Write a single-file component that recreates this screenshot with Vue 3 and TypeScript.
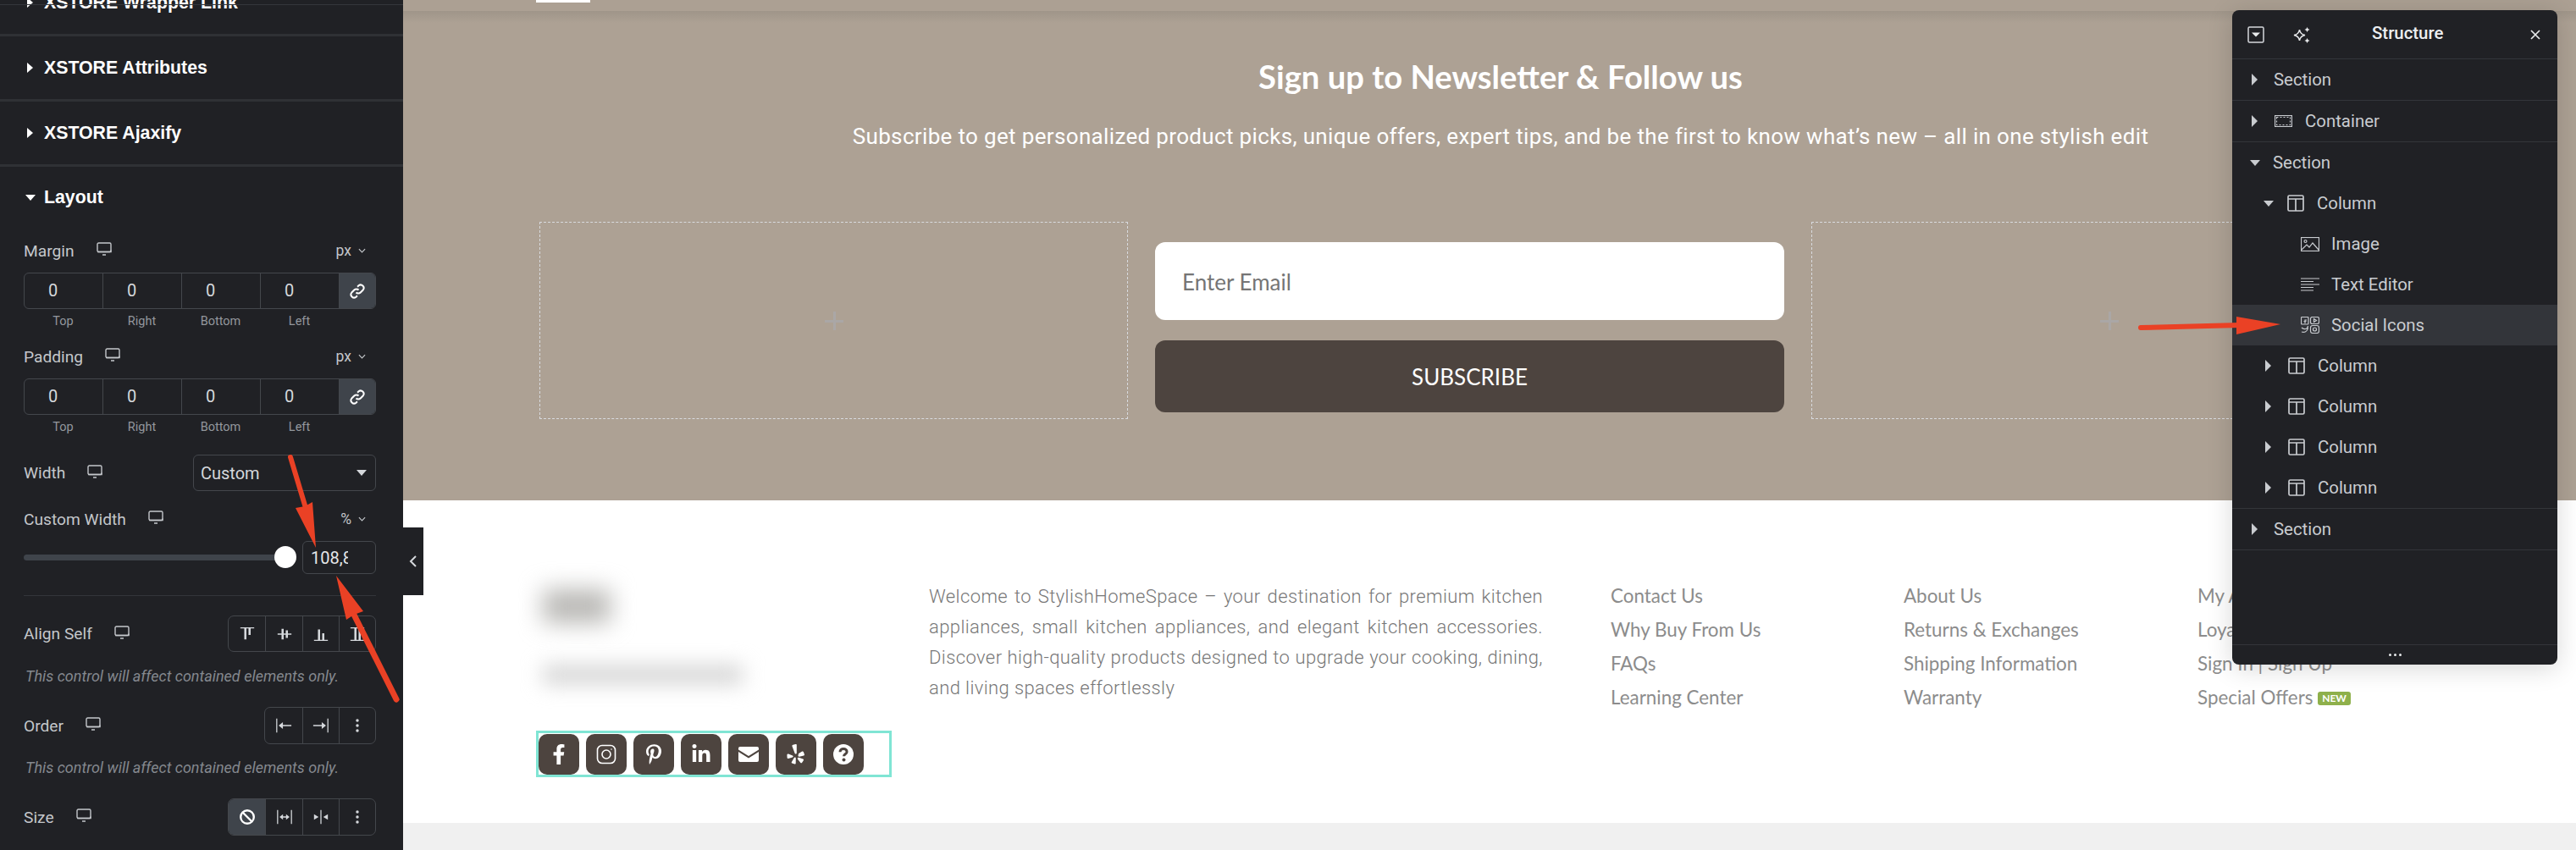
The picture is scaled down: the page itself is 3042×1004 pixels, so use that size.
<script setup lang="ts">
const boxLabels = ['Top', 'Right', 'Bottom', 'Left']
const boxes = ['Margin', 'Padding']
const col1 = ['Contact Us', 'Why Buy From Us', 'FAQs', 'Learning Center']
const col2 = ['About Us', 'Returns & Exchanges', 'Shipping Information', 'Warranty']
const col3 = ['My Account', 'Loyalty Program', 'Sign In | Sign Up']
const columns = [1, 2, 3, 4]
</script>

<template>
  <div class="root">
    <aside class="side">
      <div class="side-line"></div>
      <div class="acc first"><span class="caret-r"></span><span>XSTORE Wrapper Link</span></div>
      <div class="acc"><span class="caret-r"></span><span>XSTORE Attributes</span></div>
      <div class="acc"><span class="caret-r"></span><span>XSTORE Ajaxify</span></div>
      <div class="layout-head"><span class="caret-d"></span><span>Layout</span></div>

      <div class="controls">
        <template v-for="(b, i) in boxes" :key="b">
          <div class="ctl-head" :class="{ 'mt-pad': i === 1 }">
            <span class="lbl">{{ b }}</span>
            <svg class="mon" viewBox="0 0 18 16"><rect x="1" y="1" width="16" height="10.5" rx="1.5" /><path d="M1 11.5h16v-2M7 15h4" /></svg>
            <span class="unit">px<svg class="chev" viewBox="0 0 10 6"><path d="M1 1l4 4 4-4" /></svg></span>
          </div>
          <div class="dims">
            <div v-for="l in boxLabels" :key="l" class="dim">0</div>
            <div class="dim-link">
              <svg viewBox="0 0 20 20"><path d="M8.5 11.5a3.6 3.6 0 0 0 5.2 0l3-3a3.7 3.7 0 0 0-5.2-5.2l-1.4 1.4M11.5 8.5a3.6 3.6 0 0 0-5.2 0l-3 3a3.7 3.7 0 0 0 5.2 5.2l1.4-1.4" /></svg>
            </div>
          </div>
          <div class="dim-labels">
            <span v-for="l in boxLabels" :key="l">{{ l }}</span>
            <i></i>
          </div>
        </template>

        <div class="row-width">
          <span class="lbl">Width</span>
          <svg class="mon" viewBox="0 0 18 16"><rect x="1" y="1" width="16" height="10.5" rx="1.5" /><path d="M1 11.5h16v-2M7 15h4" /></svg>
          <div class="select"><span>Custom</span><span class="sel-caret"></span></div>
        </div>

        <div class="ctl-head mt-cw">
          <span class="lbl">Custom Width</span>
          <svg class="mon" viewBox="0 0 18 16"><rect x="1" y="1" width="16" height="10.5" rx="1.5" /><path d="M1 11.5h16v-2M7 15h4" /></svg>
          <span class="unit">%<svg class="chev" viewBox="0 0 10 6"><path d="M1 1l4 4 4-4" /></svg></span>
        </div>
        <div class="slider-row">
          <div class="track"><div class="thumb"></div></div>
          <div class="num"><span>108,8</span></div>
        </div>
        <div class="rule"></div>

        <div class="choice-row first-choice">
          <span class="lbl">Align Self</span>
          <svg class="mon" viewBox="0 0 18 16"><rect x="1" y="1" width="16" height="10.5" rx="1.5" /><path d="M1 11.5h16v-2M7 15h4" /></svg>
          <div class="group">
            <div class="cell"><svg viewBox="0 0 22 20"><path d="M2 2h18" /><path class="th" d="M8.5 2v15M14 2v9" /></svg></div>
            <div class="cell"><svg viewBox="0 0 22 20"><path d="M2 10h18" /><path class="th" d="M8.5 3v14M14 5v10" /></svg></div>
            <div class="cell"><svg viewBox="0 0 22 20"><path d="M2 18h18" /><path class="th" d="M8.5 4v14M14 9v9" /></svg></div>
            <div class="cell"><svg viewBox="0 0 22 20"><path d="M2 2h18M2 18h18" /><path class="th" d="M8.5 2v16M14 2v16" /></svg></div>
          </div>
        </div>
        <p class="note n1">This control will affect contained elements only.</p>

        <div class="choice-row second-choice">
          <span class="lbl">Order</span>
          <svg class="mon" viewBox="0 0 18 16"><rect x="1" y="1" width="16" height="10.5" rx="1.5" /><path d="M1 11.5h16v-2M7 15h4" /></svg>
          <div class="group">
            <div class="cell"><svg viewBox="0 0 22 20"><path d="M2 1v18M21 10H6" /><path class="fl" d="M4.5 10l5.5-4.5v9z" /></svg></div>
            <div class="cell"><svg viewBox="0 0 22 20"><path d="M20 1v18M1 10h15" /><path class="fl" d="M17.5 10L12 5.500v9z" /></svg></div>
            <div class="cell"><svg viewBox="0 0 22 20"><circle class="fl" cx="11" cy="3.500" r="1.900" /><circle class="fl" cx="11" cy="10" r="1.900" /><circle class="fl" cx="11" cy="16.500" r="1.900" /></svg></div>
          </div>
        </div>
        <p class="note n2">This control will affect contained elements only.</p>

        <div class="choice-row third-choice">
          <span class="lbl">Size</span>
          <svg class="mon" viewBox="0 0 18 16"><rect x="1" y="1" width="16" height="10.5" rx="1.5" /><path d="M1 11.5h16v-2M7 15h4" /></svg>
          <div class="group">
            <div class="cell active"><svg viewBox="0 0 20 20"><circle class="ban" cx="10" cy="10" r="7.800" /><path class="ban" d="M4.500 4.500l11 11" /></svg></div>
            <div class="cell"><svg viewBox="0 0 22 20"><path d="M2 1v18M20 1v18M7 10h8" /><path class="fl" d="M4.500 10L9 6.500v7zM17.500 10L13 6.500v7z" /></svg></div>
            <div class="cell"><svg viewBox="0 0 22 20"><path d="M11 1v18" /><path class="fl" d="M8 10L2 6.500v7zM14 10l6-3.500v7z" /></svg></div>
            <div class="cell"><svg viewBox="0 0 22 20"><circle class="fl" cx="11" cy="3.500" r="1.900" /><circle class="fl" cx="11" cy="10" r="1.900" /><circle class="fl" cx="11" cy="16.500" r="1.900" /></svg></div>
          </div>
        </div>
      </div>
    </aside>

    <main class="main">
      <section class="news">
        <div class="top-strip"><span class="top-tab"></span></div>
        <div class="top-shade"></div>
        <h2 class="news-title">Sign up to Newsletter &amp; Follow us</h2>
        <p class="news-sub">Subscribe to get personalized product picks, unique offers, expert tips, and be the first to know what’s new – all in one stylish edit</p>
        <div class="news-row">
          <div class="empty"><span class="plus"></span></div>
          <div class="form">
            <div class="email">Enter Email</div>
            <div class="sub-btn">SUBSCRIBE</div>
          </div>
          <div class="empty wide"><span class="plus"></span></div>
        </div>
      </section>

      <section class="foot">
        <div class="brand">
          <div class="blob-a"></div>
          <div class="blob-b"></div>
          <div class="social">
            <span class="si"><svg viewBox="0 0 320 512"><path d="M279.14 288l14.22-92.66h-88.91v-60.13c0-25.35 12.42-50.06 52.24-50.06h40.42V6.26S260.43 0 225.36 0c-73.22 0-121.08 44.38-121.08 124.72v70.62H22.89V288h81.39v224h100.17V288z" /></svg></span>
            <span class="si"><svg class="ig" viewBox="0 0 24 24"><rect x="1.500" y="1.500" width="21" height="21" rx="5.500" /><circle cx="12" cy="12" r="5" /><circle class="igd" cx="18" cy="6" r="0.800" /></svg></span>
            <span class="si"><svg viewBox="0 0 384 512"><path d="M204 6.500C101.400 6.500 0 74.900 0 185.600 0 256 39.600 296 63.600 296c9.900 0 15.600-27.600 15.600-35.400 0-9.300-23.700-29.100-23.700-67.800 0-80.400 61.200-137.400 140.400-137.400 68.100 0 118.500 38.700 118.500 109.800 0 53.100-21.300 152.700-90.300 152.700-24.900 0-46.200-18-46.200-43.800 0-37.800 26.400-74.400 26.400-113.400 0-66.200-93.900-54.200-93.900 25.800 0 16.800 2.100 35.400 9.600 50.700-13.800 59.400-42 147.900-42 209.100 0 18.900 2.700 37.500 4.500 56.400 3.400 3.800 1.700 3.400 6.900 1.500 50.400-69 48.600-82.500 71.400-172.800 12.300 23.400 44.100 36 69.300 36 106.200 0 153.900-103.500 153.900-196.800C384 71.300 298.200 6.500 204 6.500z" /></svg></span>
            <span class="si"><svg viewBox="0 0 448 512"><path d="M100.280 448H7.400V148.900h92.880zM53.790 108.100C24.090 108.100 0 83.500 0 53.800a53.790 53.790 0 0 1 107.580 0c0 29.700-24.100 54.300-53.790 54.300zM447.900 448h-92.680V302.400c0-34.700-.7-79.200-48.290-79.200-48.290 0-55.690 37.700-55.690 76.700V448h-92.780V148.900h89.080v40.800h1.300c12.400-23.500 42.690-48.300 87.880-48.300 94 0 111.280 61.900 111.280 142.300V448z" /></svg></span>
            <span class="si"><svg class="mail" viewBox="0 0 24 18"><path class="m-b" d="M2 0h20a2 2 0 0 1 2 2v1.500L12 11 0 3.500V2a2 2 0 0 1 2-2z" /><path class="m-b" d="M0 6l12 7.500L24 6v10a2 2 0 0 1-2 2H2a2 2 0 0 1-2-2z" /></svg></span>
            <span class="si"><svg class="yelp" viewBox="0 0 24 24"><path d="M8.500 0.800l3-.8c.8-.2 1.300.3 1.300 1v9.300c0 1.300-1.500 1.700-2.100.6L7.500 2.600c-.4-.7-.1-1.500 1-1.800z" /><path d="M3 11.500l5 1.900c1 .4 1 1.700-.1 2l-5 1.500c-.7.200-1.200-.2-1.300-.9l-.2-3.200c0-.9.700-1.600 1.600-1.300z" /><path d="M11.800 16.700l-.1 5.700c0 .8-.6 1.300-1.300 1.100l-3-1c-.7-.2-.9-.9-.5-1.500l2.900-4.900c.6-1 2-.6 2 .6z" /><path d="M15.300 15.800l5 1.800c.7.300.9 1 .5 1.600l-1.800 2.700c-.4.600-1.100.6-1.600.1l-3.400-4.300c-.8-1 .2-2.300 1.300-1.900z" /><path d="M14.900 11.300l4.300-2.700c.6-.4 1.300-.2 1.600.5l1.100 3c.3.700-.1 1.300-.8 1.500l-5.100 1.100c-1.300.3-2-1.500-1.100-2.400z" /></svg></span>
            <span class="si"><svg class="q" viewBox="0 0 24 24"><circle class="q-c" cx="12" cy="12" r="12" /><path class="q-s" d="M8 9.200c0-2.300 1.800-3.700 4.100-3.700 2.200 0 4 1.300 4 3.400 0 2.900-3.600 2.900-3.600 5.300" /><circle class="q-d" cx="12.500" cy="18.500" r="2" /></svg></span>
          </div>
        </div>
        <p class="about">Welcome to StylishHomeSpace – your destination for premium kitchen appliances, small kitchen appliances, and elegant kitchen accessories. Discover high-quality products designed to upgrade your cooking, dining, and living spaces effortlessly</p>
        <ul class="links w1"><li v-for="t in col1" :key="t">{{ t }}</li></ul>
        <ul class="links w2"><li v-for="t in col2" :key="t">{{ t }}</li></ul>
        <ul class="links">
          <li v-for="t in col3" :key="t">{{ t }}</li>
          <li>Special Offers <span class="badge">NEW</span></li>
        </ul>
      </section>
      <div class="strip-bottom"></div>
    </main>

    <button class="collapse"><svg viewBox="0 0 10 16"><path d="M8 2L2 8l6 6" /></svg></button>

    <div class="structure">
      <header class="st-head">
        <svg class="st-ic1" viewBox="0 0 20 20"><rect x="1" y="1" width="18" height="18" rx="1.500" /><path class="st-fill" d="M5 7.500h10l-5 5z" /></svg>
        <svg class="st-ic2" viewBox="0 0 20 19"><path class="st-sp" d="M7.500 3c.7 4.200 2.300 5.800 6.500 6.500-4.200.7-5.800 2.300-6.500 6.500-.7-4.200-2.300-5.800-6.500-6.500 4.200-.7 5.800-2.300 6.500-6.500z" /><path class="st-fill" d="M16.500 0l1 2 2 1-2 1-1 2-1-2-2-1 2-1zM16.500 13l1 2 2 1-2 1-1 2-1-2-2-1 2-1z" /></svg>
        <span class="st-title">Structure</span>
        <svg class="st-x" viewBox="0 0 12 12"><path d="M1 1l10 10M11 1L1 11" /></svg>
      </header>
      <div class="st-row st-line l0"><span class="caret-r"></span><span>Section</span></div>
      <div class="st-row st-line l0 has-ic">
        <span class="caret-r"></span>
        <svg class="tic cont" viewBox="0 0 21 14"><rect x="0.500" y="0.500" width="20" height="13" /><rect class="dash" x="2.500" y="2.500" width="16" height="9" /></svg>
        <span>Container</span>
      </div>
      <div class="st-row l0 open"><span class="caret-d"></span><span>Section</span></div>
      <div class="st-row l1 open">
        <span class="caret-d"></span>
        <svg class="tic col" viewBox="0 0 20 20"><rect x="1" y="1" width="18" height="18" rx="1.500" /><path d="M1 5h18M10 5v14" /></svg>
        <span>Column</span>
      </div>
      <div class="st-row l2">
        <svg class="tic wid" viewBox="0 0 22 17"><rect x="0.500" y="0.500" width="21" height="16" /><circle cx="5.500" cy="5" r="1.500" /><path d="M1 15l6-6 3 3 4-5 7 8" /></svg>
        <span>Image</span>
      </div>
      <div class="st-row l2">
        <svg class="tic wid" viewBox="0 0 22 17"><path d="M0 1h22M0 4.500h15M0 8h22M0 11.500h15M0 15h15" /></svg>
        <span>Text Editor</span>
      </div>
      <div class="st-row l2 sel">
        <svg class="tic wid soc" viewBox="0 0 22 20"><rect x="0.500" y="0.500" width="8.500" height="8.500" rx="1" /><rect x="11.500" y="0.500" width="10" height="8" rx="2" /><path d="M15.500 2.500l3 2-3 2z" /><path d="M1 13c2 2 4 2 6 1 1-1 1.500-2 1.500-3M1 18c3 1 7 0 7.500-5" /><rect x="11.500" y="10.500" width="10" height="9" rx="2.500" /><circle cx="16.500" cy="15" r="2" /><path d="M5 8V4h2M3.500 5.500h3" /></svg>
        <span>Social Icons</span>
      </div>
      <div v-for="c in columns" :key="c" class="st-row l1">
        <span class="caret-r"></span>
        <svg class="tic col" viewBox="0 0 20 20"><rect x="1" y="1" width="18" height="18" rx="1.500" /><path d="M1 5h18M10 5v14" /></svg>
        <span>Column</span>
      </div>
      <div class="st-row st-top st-line l0"><span class="caret-r"></span><span>Section</span></div>
      <div class="st-spacer"></div>
      <footer class="st-foot"><i></i><i></i><i></i></footer>
    </div>

    <svg class="arrows" viewBox="0 0 3042 1004">
      <path class="ar" d="M343 540L361 600" />
      <path class="arh" d="M373 647L349 600 360 598 369 593z" />
      <path class="ar w" d="M468 826L418 726" />
      <path class="arh" d="M397 680L409 732 418 726 429 722z" />
      <path class="ar" d="M2528 387L2645 384" />
      <path class="arh" d="M2693 383L2641 374 2641 395z" />
    </svg>
  </div>
</template>

<style>
html, body { margin: 0; background: #fff; }
</style>

<style scoped>
.root {
  position: relative;
  display: flex;
  width: 3042px;
  height: 1004px;
  overflow: hidden;
  font-family: Roboto, "Liberation Sans", sans-serif;
}

/* left panel */
.side {
  position: relative;
  flex: none;
  width: 476px;
  height: 1004px;
  overflow: hidden;
  background: #202125;
  color: #c4c7cb;
}
.side-line { position: absolute; left: 0; right: 0; top: 5px; height: 1px; background: #34363b; }
.acc {
  display: flex;
  align-items: center;
  gap: 13px;
  box-sizing: border-box;
  height: 77px;
  padding-left: 32px;
  border-bottom: 3px solid #2f3135;
  font: 700 21.300px "Liberation Sans", Arial, sans-serif;
  color: #fff;
}
.acc.first { margin-top: -34px; padding-top: 0; }
.caret-r {
  display: inline-block;
  flex: none;
  width: 0;
  height: 0;
  border-left: 7px solid currentColor;
  border-top: 6px solid transparent;
  border-bottom: 6px solid transparent;
}
.caret-d {
  display: inline-block;
  flex: none;
  width: 0;
  height: 0;
  border-top: 7px solid currentColor;
  border-left: 6.500px solid transparent;
  border-right: 6.500px solid transparent;
}
.layout-head {
  display: flex;
  align-items: center;
  gap: 10px;
  height: 72px;
  margin-bottom: -2px;
  padding-left: 30px;
  font: 700 21.300px "Liberation Sans", Arial, sans-serif;
  color: #fff;
}
.controls { padding: 16px 32px 0 28px; }
.ctl-head { display: flex; align-items: center; height: 26px; margin-bottom: 13px; }
.mt-pad { margin-top: 18px; }
.mt-cw { margin-top: 20px; }
.lbl { font-size: 19.200px; color: #c4c7cb; }
.mon { flex: none; width: 18px; height: 16px; margin: -4px 0 0 26px; fill: none; stroke: #c4c7cb; stroke-width: 1.400; }
.unit { display: flex; align-items: center; gap: 8px; margin-left: auto; padding-right: 12px; font-size: 17.500px; color: #c4c7cb; }
.chev { width: 9px; height: 6px; fill: none; stroke: #c4c7cb; stroke-width: 1.300; }
.dims {
  display: flex;
  box-sizing: border-box;
  height: 43px;
  overflow: hidden;
  border: 1px solid #44474c;
  border-radius: 6px;
}
.dim {
  flex: none;
  box-sizing: border-box;
  width: 93px;
  padding-right: 25px;
  border-right: 1px solid #44474c;
  font-size: 20px;
  line-height: 40px;
  text-align: center;
  color: #d5d8dc;
}
.dim-link {
  display: flex;
  flex: 1;
  align-items: center;
  justify-content: center;
  background: #3f444b;
}
.dim-link svg { width: 20px; height: 20px; fill: none; stroke: #fff; stroke-width: 2; }
.dim-labels { display: flex; height: 20px; margin-top: 5px; }
.dim-labels span {
  flex: none;
  width: 93px;
  font-size: 14.500px;
  line-height: 20px;
  text-align: center;
  color: #93979d;
}
.row-width { display: flex; align-items: center; height: 43px; margin-top: 22px; }
.select {
  display: flex;
  align-items: center;
  justify-content: space-between;
  box-sizing: border-box;
  width: 216px;
  height: 43px;
  margin-left: auto;
  padding: 0 10px 0 8px;
  border: 1px solid #44474c;
  border-radius: 6px;
  font-size: 20px;
  color: #d5d8dc;
}
.sel-caret { width: 0; height: 0; border-top: 7px solid #d5d8dc; border-left: 6.500px solid transparent; border-right: 6.500px solid transparent; }
.slider-row { display: flex; align-items: center; height: 39px; margin-top: 1px; }
.track { position: relative; flex: none; width: 317px; height: 7px; border-radius: 4px; background: #3f444b; }
.thumb { position: absolute; right: -5px; top: -10px; width: 26px; height: 26px; border-radius: 50%; background: #fff; }
.num {
  display: flex;
  align-items: center;
  box-sizing: border-box;
  width: 87px;
  height: 39px;
  margin-left: auto;
  padding: 0 32px 0 9px;
  border: 1px solid #44474c;
  border-radius: 6px;
  overflow: hidden;
  font-size: 20px;
  color: #e4e6e8;
}
.num span { display: block; width: 100%; overflow: hidden; white-space: nowrap; }
.rule { height: 1px; margin-top: 25px; background: #33353a; }
.choice-row { display: flex; align-items: center; }
.first-choice { margin-top: 23px; height: 43px; }
.second-choice { margin-top: 22px; height: 44px; }
.third-choice { margin-top: 22px; height: 44px; }
.group {
  display: flex;
  box-sizing: border-box;
  height: 100%;
  margin-left: auto;
  overflow: hidden;
  border: 1px solid #44474c;
  border-radius: 7px;
}
.cell {
  display: flex;
  align-items: center;
  justify-content: center;
  box-sizing: border-box;
  width: 43.200px;
  border-left: 1px solid #44474c;
}
.cell:first-child { border-left: 0; }
.cell.active { background: #3f444b; }
.cell svg { width: 20px; height: 20px; fill: none; stroke: #d5d8dc; stroke-width: 1.400; }
.cell svg .th { stroke-width: 2.800; }
.cell svg .fl { fill: #d5d8dc; stroke: none; }
.cell svg .ban { stroke: #fff; stroke-width: 2.400; }
.note {
  height: 28px;
  margin: 15px 0 0 2px;
  font-size: 18px;
  font-style: italic;
  line-height: 28px;
  color: #84888e;
  white-space: nowrap;
}
.note.n2 { margin-top: 14px; }

/* main */
.main { display: flex; flex: 1; flex-direction: column; min-width: 0; }
.news { flex: none; height: 591px; overflow: hidden; background: #ada194; }
.top-strip { position: relative; height: 13px; background: #aca093; }
.top-tab {
  position: absolute;
  left: 157px;
  top: 0;
  width: 64px;
  height: 3px;
  background: #fff;
}
.top-shade { height: 14px; margin-bottom: -14px; background: linear-gradient(#9f9589, #ada194); }
.news-title {
  margin: 53px 0 0;
  padding-left: 26px;
  font: 700 38.200px/48px Lato, sans-serif;
  text-align: center;
  color: #fff;
}
.news-sub {
  margin: 29px 0 0;
  padding-left: 26px;
  font: 400 26px/36px Roboto, sans-serif;
  letter-spacing: 0.340px;
  text-align: center;
  color: #fff;
  white-space: nowrap;
}
.news-row { display: flex; gap: 32px; height: 233px; margin: 83px 0 0 161px; }
.empty {
  position: relative;
  flex: none;
  box-sizing: border-box;
  width: 695px;
  border: 1px dashed #d8dade;
}
.empty.wide { width: 703px; }
.plus { position: absolute; left: 50%; top: 50%; width: 22px; height: 22px; margin: -11px 0 0 -11px; opacity: .55; }
.plus::before, .plus::after { content: ""; position: absolute; background: #a8adb5; }
.plus::before { left: 10px; top: 0; width: 3px; height: 22px; }
.plus::after { left: 0; top: 10px; width: 22px; height: 3px; }
.form { display: flex; flex: none; flex-direction: column; gap: 24px; width: 743px; padding-top: 24px; }
.email {
  box-sizing: border-box;
  height: 92px;
  padding-left: 32px;
  border-radius: 12px;
  background: #fff;
  font: 400 26px/94px Lato, sans-serif;
  color: #757575;
}
.sub-btn {
  height: 85px;
  border-radius: 12px;
  background: #4d443f;
  font: 400 26px/87px Lato, sans-serif;
  text-align: center;
  color: #fff;
}
.foot {
  display: grid;
  flex: none;
  grid-template-columns: 460px 805px 346px 347px 1fr;
  height: 381px;
  padding-left: 161px;
  box-sizing: border-box;
  background: #fff;
}
.brand { position: relative; display: flex; flex-direction: column; padding-top: 272px; }
.blob-a { position: absolute; left: 4px; top: 105px; width: 80px; height: 40px; background: #b9b8b5; filter: blur(14px); }
.blob-b { position: absolute; left: 4px; top: 195px; width: 236px; height: 22px; background: #d3d3d3; filter: blur(12px); }
.social {
  display: flex;
  gap: 8px;
  box-sizing: border-box;
  width: 420px;
  height: 55px;
  margin-left: -4px;
  padding: 1px 0 0 0;
  border: 3px solid #80e5d4;
}
.si {
  display: flex;
  flex: none;
  align-items: center;
  justify-content: center;
  width: 48px;
  height: 48px;
  border-radius: 10px;
  background: #4d443f;
}
.si svg { width: 24px; height: 24px; fill: #fff; }
.si svg.ig { fill: none; stroke: #fff; stroke-width: 1.600; }
.si svg.ig .igd { fill: #fff; stroke: none; }
.si svg.mail .m-b { fill: #fff; }
.si svg.q .q-c { fill: #fff; }
.si svg.q .q-s { fill: none; stroke: #4d443f; stroke-width: 3; }
.si svg.q .q-d { fill: #4d443f; }
.about {
  margin: 96px 0 0;
  width: 725px;
  font: 300 22px/36px Roboto, sans-serif;
  letter-spacing: 0.400px;
  text-align: justify;
  color: #777;
}
.links { margin: 93px 0 0; padding: 0; list-style: none; }
.links li {
  height: 40px;
  font: 400 22.400px/40px Lato, sans-serif;
  color: #8c8c8c;
  white-space: nowrap;
}
.badge {
  display: inline-block;
  margin-left: 0;
  padding: 0 5px;
  border-radius: 3px;
  background: #8eb04b;
  font: 700 12px/16px Lato, sans-serif;
  color: #fff;
  vertical-align: 3px;
}
.strip-bottom { flex: 1; background: #f0f0f0; }

.collapse {
  position: absolute;
  left: 476px;
  top: 623px;
  display: flex;
  align-items: center;
  justify-content: center;
  width: 24px;
  height: 80px;
  padding: 0;
  border: 0;
  background: #202125;
}
.collapse svg { width: 10px; height: 16px; fill: none; stroke: #d5d8dc; stroke-width: 2; }

/* structure panel */
.structure {
  position: absolute;
  left: 2636px;
  top: 12px;
  display: flex;
  flex-direction: column;
  width: 384px;
  height: 773px;
  border-radius: 8px;
  background: #202125;
  box-shadow: 0 4px 30px rgba(0, 0, 0, .16);
  color: #c9ccd0;
  font-size: 20.400px;
}
.structure .caret-r { border-top-width: 7px; border-bottom-width: 7px; }
.st-head { position: relative; flex: none; box-sizing: border-box; height: 58px; border-bottom: 1px solid #33353a; }
.st-ic1 { position: absolute; left: 18px; top: 19px; width: 20px; height: 20px; fill: none; stroke: #d5d8dc; stroke-width: 1.500; }
.st-fill { fill: #e8eaec; stroke: none; }
.st-ic2 { position: absolute; left: 72px; top: 20px; width: 20px; height: 19px; fill: none; }
.st-sp { fill: none; stroke: #e8eaec; stroke-width: 1.500; }
.st-title { position: absolute; left: 165px; top: 13px; font-weight: 500; line-height: 28px; color: #eceef0; }
.st-x { position: absolute; left: 352px; top: 23px; width: 12px; height: 12px; fill: none; stroke: #e8eaec; stroke-width: 1.700; }
.st-row { display: flex; flex: none; align-items: center; box-sizing: border-box; height: 48px; }
.st-line { border-bottom: 1px solid #33353a; height: 49px; }
.st-top { height: 50px; border-top: 1px solid #33353a; }
.l0 { padding-left: 23px; gap: 19px; }
.l0.open { gap: 15px; padding-left: 21px; }
.l0.has-ic { gap: 0; }
.l0.has-ic .tic { margin: 0 15px 0 20px; }
.l1 { padding-left: 39px; }
.l1.open { padding-left: 37px; }
.l1 .tic { margin: 0 15px 0 20px; }
.l1.open .tic { margin-left: 16px; }
.l2 { padding-left: 81px; }
.l2 .tic { margin-right: 14px; }
.sel { background: #33353a; }
.tic { flex: none; fill: none; stroke: #c9ccd0; stroke-width: 1.200; }
.tic.cont { width: 21px; height: 14px; }
.tic.cont .dash { stroke-dasharray: 2 2; }
.tic.col { width: 20px; height: 20px; stroke-width: 1.700; }
.tic.wid { width: 22px; height: 17px; }
.tic.soc { height: 20px; }
.st-spacer { flex: 1; }
.st-foot {
  display: flex;
  flex: none;
  align-items: center;
  justify-content: center;
  gap: 3px;
  height: 23px;
  border-top: 1px solid #33353a;
}
.st-foot i { width: 3px; height: 3px; border-radius: 50%; background: #e8eaec; }

.arrows { position: absolute; left: 0; top: 0; width: 3042px; height: 1004px; pointer-events: none; }
.ar { fill: none; stroke: #ea4125; stroke-width: 6; stroke-linecap: round; }
.ar.w { stroke-width: 7; }
.arh { fill: #ea4125; }
</style>
